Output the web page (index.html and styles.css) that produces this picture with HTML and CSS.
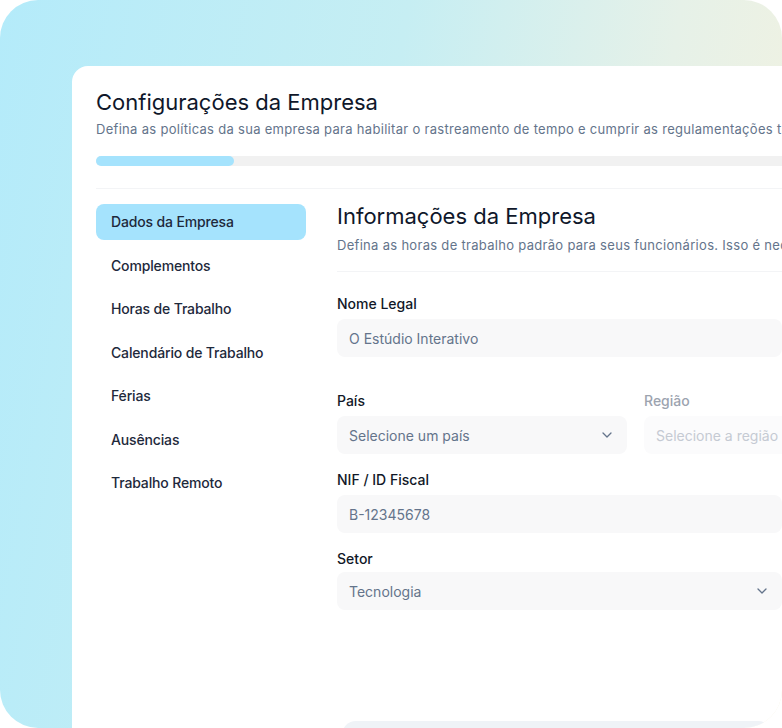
FILE: index.html
```html
<!DOCTYPE html>
<html lang="pt">
<head>
    <meta charset="UTF-8">
    <title>Configurações da Empresa</title>
    <link rel="stylesheet" href="styles.css">
</head>
<body>
    <div class="frame">
        <div class="card">
            <h1 class="title">Configurações da Empresa</h1>
            <p class="subtitle">Defina as políticas da sua empresa para habilitar o rastreamento de tempo e cumprir as regulamentações trabalhistas locais.</p>
            <div class="progress"><div class="progress-fill"></div></div>
            <hr class="divider">

            <div class="layout">
                <nav class="sidebar">
                    <a class="nav-item active">Dados da Empresa</a>
                    <a class="nav-item">Complementos</a>
                    <a class="nav-item">Horas de Trabalho</a>
                    <a class="nav-item">Calendário de Trabalho</a>
                    <a class="nav-item">Férias</a>
                    <a class="nav-item">Ausências</a>
                    <a class="nav-item">Trabalho Remoto</a>
                </nav>

                <main class="main">
                    <h2 class="section-title">Informações da Empresa</h2>
                    <p class="section-sub">Defina as horas de trabalho padrão para seus funcionários. Isso é necessário para o cálculo.</p>
                    <hr class="divider section-divider">

                    <div class="field field-legal">
                        <label class="label">Nome Legal</label>
                        <div class="input">O Estúdio Interativo</div>
                    </div>

                    <div class="row">
                        <div class="field">
                            <label class="label">País</label>
                            <div class="input select">
                                <span>Selecione um país</span>
                                <svg class="chevron" width="10" height="6" viewBox="0 0 10 6"><path d="M1 1l4 4 4-4" fill="none" stroke="#64748b" stroke-width="1.3" stroke-linecap="round" stroke-linejoin="round"/></svg>
                            </div>
                        </div>
                        <div class="field disabled">
                            <label class="label">Região</label>
                            <div class="input select">
                                <span>Selecione a região</span>
                            </div>
                        </div>
                    </div>

                    <div class="field">
                        <label class="label">NIF / ID Fiscal</label>
                        <div class="input">B-12345678</div>
                    </div>

                    <div class="field field-sector">
                        <label class="label">Setor</label>
                        <div class="input select">
                            <span>Tecnologia</span>
                            <svg class="chevron" width="10" height="6" viewBox="0 0 10 6"><path d="M1 1l4 4 4-4" fill="none" stroke="#64748b" stroke-width="1.3" stroke-linecap="round" stroke-linejoin="round"/></svg>
                        </div>
                    </div>

                    <div class="footer-bar"></div>
                </main>
            </div>
        </div>
    </div>
</body>
</html>
```

FILE: styles.css
```css
* {
    box-sizing: border-box;
}

body {
    margin: 0;
    font-family: 'Inter', 'Noto Sans', sans-serif;
    background-color: #ffffff;
    color: #111827;
}

.frame {
    width: 782px;
    height: 728px;
    overflow: hidden;
    border-radius: 38px;
    background: linear-gradient(100deg, #b4ebfa 0%, #c6eef3 45%, #e6f1e8 75%, #f5f2df 100%);
    padding: 66px 0 0 72px;
}

.card {
    width: 820px;
    min-height: 700px;
    background-color: #ffffff;
    border-radius: 16px 0 0 0;
    padding: 22px 0 0 24px;
}

.title {
    margin: 0;
    font-size: 22px;
    line-height: 28px;
    font-weight: 400;
    color: #0f172a;
}

.subtitle {
    margin: 4px 0 0;
    font-size: 13px;
    line-height: 18px;
    color: #64748b;
    white-space: nowrap;
    letter-spacing: 0.3px;
}

.progress {
    margin-top: 18px;
    height: 10px;
    background-color: #f1f1f1;
    border-radius: 5px;
}

.progress-fill {
    width: 138px;
    height: 10px;
    background-color: #a5e3fd;
    border-radius: 5px;
}

.divider {
    border: 0;
    border-top: 1px solid #f3f4f6;
    margin: 22px 0 0;
}

.layout {
    display: flex;
    gap: 31px;
    margin-top: 13px;
}

.sidebar {
    width: 210px;
    flex-shrink: 0;
    display: flex;
    flex-direction: column;
    gap: 7.5px;
    padding-top: 2px;
}

.nav-item {
    display: block;
    height: 36px;
    line-height: 36px;
    padding: 0 15px;
    border-radius: 8px;
    font-size: 14px;
    font-weight: 500;
    color: #1e293b;
    letter-spacing: -0.15px;
}

.nav-item.active {
    background-color: #a5e3fd;
}

.main {
    width: 445px;
    flex-shrink: 0;
}

.section-title {
    margin: 0;
    font-size: 22px;
    line-height: 28px;
    font-weight: 400;
    color: #0f172a;
}

.section-sub {
    margin: 6px 0 0;
    font-size: 13px;
    line-height: 18px;
    color: #64748b;
    white-space: nowrap;
    letter-spacing: 0.3px;
}

.section-divider {
    margin-top: 17px;
}

.field {
    margin-top: 16px;
}

.field-legal {
    margin-top: 22px;
    margin-bottom: 34px;
}

.row {
    display: grid;
    grid-template-columns: 290px 290px;
    gap: 17px;
}

.row .field {
    margin-top: 0;
}

.label {
    display: block;
    font-size: 14px;
    line-height: 20px;
    font-weight: 500;
    color: #111827;
    margin-bottom: 5px;
}

.field-sector .label {
    margin-bottom: 3px;
}

.input {
    height: 38px;
    display: flex;
    align-items: center;
    justify-content: space-between;
    padding: 0 12px;
    background-color: #f8f8f9;
    border-radius: 8px;
    font-size: 14px;
    color: #64748b;
}

.chevron {
    margin-right: 3px;
}

.disabled .label {
    color: #9ca3af;
}

.disabled .input {
    background-color: #fbfbfc;
    color: #c5cad3;
}

.footer-bar {
    margin: 111px 10px 0 5px;
    height: 40px;
    background-color: #eff3f7;
    border-radius: 14px;
}
```
